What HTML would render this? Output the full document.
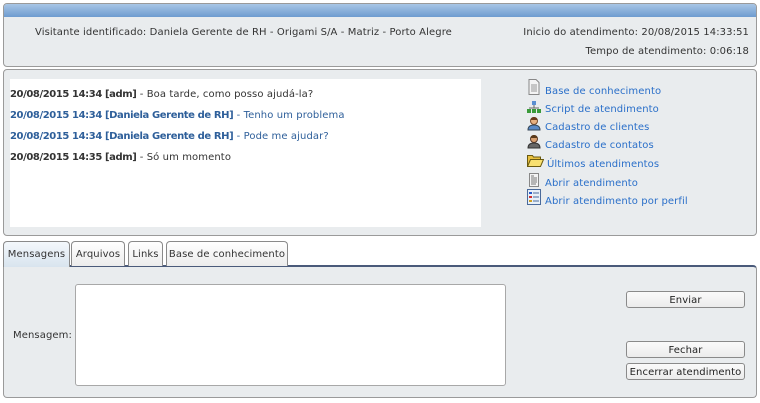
<!DOCTYPE html>
<html><head><meta charset="utf-8"><style>
*{box-sizing:border-box;margin:0;padding:0}
body{width:760px;height:403px;background:#fff;font-family:"DejaVu Sans","Liberation Sans",sans-serif;font-size:10px;letter-spacing:0.1px;color:#333;position:relative;overflow:hidden}
b{letter-spacing:-0.4px}
.a{position:absolute;white-space:nowrap}
.box{position:absolute;background:#e9ecee;border:1px solid #9a9a9a;border-radius:4px}
.lnk{color:#2a6fc9}
.btn{position:absolute;left:626px;width:119px;height:17px;border:1px solid #8a8a8a;border-radius:3px;background:linear-gradient(#fafafa,#ececec);text-align:center;line-height:17px;color:#222}
.tab{position:absolute;top:241px;height:25px;border:1px solid #8a8a8a;border-bottom:none;border-radius:4px 4px 0 0;background:linear-gradient(#fff,#ececec);line-height:25px;text-align:center;color:#333}
.ic{position:absolute;left:527px;width:14px;height:14px}
</style></head><body>
<div class="box" style="left:3px;top:3px;width:754px;height:64px;overflow:hidden">
 <div style="position:absolute;left:0;top:0;right:0;height:13px;background:linear-gradient(#a8c6e6,#6e9bcf)"></div>
</div>
<div class="a" style="left:35px;top:27px">Visitante identificado: Daniela Gerente de RH - Origami S/A - Matriz - Porto Alegre</div>
<div class="a" style="right:11px;top:27px">Inicio do atendimento: 20/08/2015 14:33:51</div>
<div class="a" style="right:11px;top:46px">Tempo de atendimento: 0:06:18</div>

<div class="box" style="left:3px;top:69px;width:754px;height:167px"></div>
<div style="position:absolute;left:10px;top:79px;width:471px;height:148px;background:#fff"></div>
<div class="a" style="left:10px;top:89px"><b>20/08/2015 14:34 [adm]</b> - Boa tarde, como posso ajudá-la?</div>
<div class="a lnk" style="left:10px;top:110px;color:#2e5f9a"><b>20/08/2015 14:34 [Daniela Gerente de RH]</b> - Tenho um problema</div>
<div class="a lnk" style="left:10px;top:131px;color:#2e5f9a"><b>20/08/2015 14:34 [Daniela Gerente de RH]</b> - Pode me ajudar?</div>
<div class="a" style="left:10px;top:152px"><b>20/08/2015 14:35 [adm]</b> - Só um momento</div>

<svg class="ic" style="top:79px;height:16px" viewBox="0 0 14 16"><path d="M2 .5h7l3 3v12H2z" fill="#f4f4f4" stroke="#888"/><path d="M4 6h6M4 8h6M4 10h6M4 12h6" stroke="#999"/></svg>
<div class="a lnk" style="left:545px;top:86px">Base de conhecimento</div>
<svg class="ic" style="top:100px" viewBox="0 0 14 14"><rect x="5" y="1" width="4" height="4" fill="#5a8fd0"/><path d="M7 5v3M2 8h10" stroke="#666"/><rect x="0" y="9" width="4" height="4" fill="#3a9a3a"/><rect x="5" y="9" width="4" height="4" fill="#3a9a3a"/><rect x="10" y="9" width="4" height="4" fill="#3a9a3a"/></svg>
<div class="a lnk" style="left:545px;top:104px">Script de atendimento</div>
<svg class="ic" style="top:116px;height:15px" viewBox="0 0 14 15"><circle cx="7" cy="5" r="3.5" fill="#e8b080" stroke="#7a4a2a"/><path d="M3.5 4a3.5 3 0 0 1 7 0z" fill="#6a3a1a"/><path d="M1 14c0-4 3-5 6-5s6 1 6 5z" fill="#5a8ac8" stroke="#345"/></svg>
<div class="a lnk" style="left:545px;top:122px">Cadastro de clientes</div>
<svg class="ic" style="top:134px;height:15px" viewBox="0 0 14 15"><circle cx="7" cy="5" r="3.5" fill="#d8a070" stroke="#5a3a2a"/><path d="M3.5 4a3.5 3 0 0 1 7 0z" fill="#5a3a1a"/><path d="M1 14c0-4 3-5 6-5s6 1 6 5z" fill="#666" stroke="#333"/></svg>
<div class="a lnk" style="left:545px;top:140px">Cadastro de contatos</div>
<svg class="ic" style="top:153px;width:17px" viewBox="0 0 17 14"><path d="M.5 2.5h5l1 1.5h7v9H.5z" fill="#e8c040" stroke="#6a5a10"/><path d="M.5 13.5l3-7h13l-3 7z" fill="#f8e070" stroke="#6a5a10"/></svg>
<div class="a lnk" style="left:547px;top:159px">Últimos atendimentos</div>
<svg class="ic" style="top:173px" viewBox="0 0 14 14"><path d="M2.5 .5h9v13h-9z" fill="#f4f4f4" stroke="#888"/><path d="M4 3h3M4 5h6M4 7h6M4 9h6M4 11h5" stroke="#777"/></svg>
<div class="a lnk" style="left:545px;top:178px">Abrir atendimento</div>
<svg class="ic" style="top:189px;height:16px" viewBox="0 0 14 16"><rect x=".5" y=".5" width="13" height="15" fill="#e8f0f8" stroke="#4a6a9a"/><rect x="2" y="3" width="3" height="2" fill="#2a5ac8"/><rect x="2" y="7" width="3" height="2" fill="#d03030"/><rect x="2" y="11" width="3" height="2" fill="#d0a020"/><path d="M6 4h6M6 8h6M6 12h6" stroke="#4a6a9a"/></svg>
<div class="a lnk" style="left:545px;top:196px">Abrir atendimento por perfil</div>

<div class="box" style="left:3px;top:265px;width:754px;height:133px;border-radius:0 4px 4px 4px;border-top:2px solid #4a5a7a"></div>
<div class="tab" style="left:3px;width:67px;background:linear-gradient(#f4f8fc,#d8e4ee);height:26px">Mensagens</div>
<div class="tab" style="left:71px;width:54px">Arquivos</div>
<div class="tab" style="left:128px;width:35px">Links</div>
<div class="tab" style="left:166px;width:122px">Base de conhecimento</div>

<div class="a" style="left:13px;top:330px">Mensagem:</div>
<div style="position:absolute;left:75px;top:284px;width:431px;height:102px;background:#fff;border:1px solid #a8a8a8;border-radius:3px"></div>
<div class="btn" style="top:291px">Enviar</div>
<div class="btn" style="top:341px">Fechar</div>
<div class="btn" style="top:363px">Encerrar atendimento</div>
</body></html>
